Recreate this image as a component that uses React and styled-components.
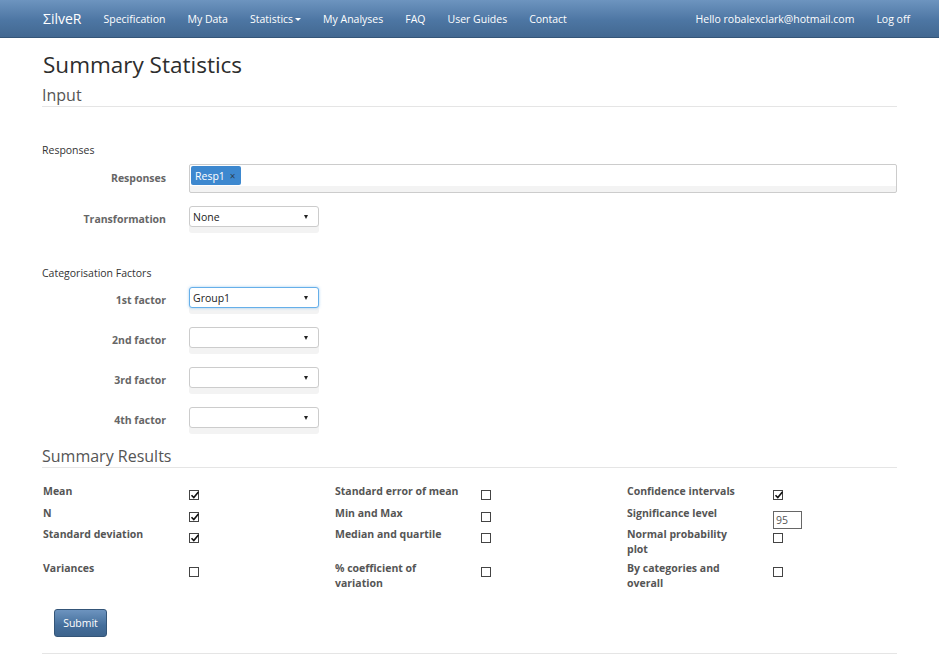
import React from "react";
import styled, { createGlobalStyle } from "styled-components";

const Global = createGlobalStyle`
  *, *::before, *::after { box-sizing: border-box; }
  html, body { margin: 0; padding: 0; background: #fff; }
  body {
    font-family: "Open Sans", "Liberation Sans", sans-serif;
    font-size: 10.5px;
    color: #333;
  }
`;

const Navbar = styled.nav`
  height: 38px;
  display: flex;
  align-items: center;
  justify-content: space-between;
  padding: 0 18px 0 32px;
  background: linear-gradient(#6d94bf, #4d76a3 55%, #426891);
  border-bottom: 1px solid #345578;
`;

const NavGroup = styled.div`
  display: flex;
  align-items: center;
`;

const NavLink = styled.a`
  padding: 0 11px;
  color: #fff;
  font-size: ${(p) => (p.$brand ? "14px" : "10.5px")};
  text-decoration: none;
  white-space: nowrap;
  display: flex;
  align-items: center;
`;

const Caret = styled.span`
  display: inline-block;
  margin-left: 2px;
  margin-top: 1px;
  border-top: 3px solid #fff;
  border-left: 3px solid transparent;
  border-right: 3px solid transparent;
`;

const Container = styled.main`
  padding: 0 42px;
`;

const Title = styled.h1`
  margin: 14px 0 0;
  font-size: 22.5px;
  font-weight: 400;
  line-height: 26px;
  color: #2d2d2d;
  padding-left: 1px;
`;

const Legend = styled.h2`
  margin: ${(p) => p.$top};
  font-size: 16px;
  font-weight: 400;
  line-height: 20px;
  color: #555;
  padding-bottom: 1px;
  border-bottom: 1px solid #e5e5e5;
`;

const GroupLabel = styled.div`
  margin-top: ${(p) => p.$top};
  line-height: 16px;
  color: #333;
`;

const FormRow = styled.div`
  display: flex;
  align-items: flex-start;
  margin-top: ${(p) => p.$top};
`;

const FieldLabel = styled.label`
  width: 147px;
  padding-right: 23px;
  padding-top: ${(p) => p.$pad || "5px"};
  text-align: right;
  font-weight: 700;
  color: #666;
  line-height: 16px;
  flex-shrink: 0;
`;

const TagBox = styled.div`
  flex: 1;
  height: 29px;
  border: 1px solid #ccc;
  border-radius: 2px;
  background: linear-gradient(#fff 0, #fff 21px, #f3f3f3 21px);
  padding: 1px;
`;

const Tag = styled.span`
  display: inline-flex;
  align-items: center;
  gap: 5px;
  height: 19px;
  padding: 0 5px 0 4px;
  background: #3d88cf;
  border-radius: 2px;
  color: #fff;
  b {
    font-weight: 400;
    color: #2c3e50;
    font-size: 10px;
  }
`;

const Select = styled.div`
  width: 130px;
  height: 21px;
  border: 1px solid ${(p) => (p.$focus ? "#66afe9" : "#ccc")};
  border-radius: 3px;
  background: #fff;
  display: flex;
  align-items: center;
  padding: 0 0 0 3px;
  color: #222;
  box-shadow: ${(p) => (p.$focus ? "0 0 3px rgba(102,175,233,0.6)," : "")} 0 6px 0 #f3f3f3;
  &::after {
    content: "";
    margin-right: 10px;
    border-top: 4px solid #222;
    border-left: 2.5px solid transparent;
    border-right: 2.5px solid transparent;
  }
`;

const SelectValue = styled.span`
  flex: 1;
`;

const Results = styled.div`
  display: grid;
  grid-template-columns: repeat(5, 146px) auto;
  grid-template-rows: 22px 21px 34px 30px;
  margin-top: 16px;
`;

const ResultLabel = styled.div`
  font-weight: 700;
  color: #555;
  line-height: 15px;
  white-space: nowrap;
  padding-left: 1px;
`;

const Cell = styled.div`
  padding: 6px 0 0 1px;
`;

const Check = styled.span`
  display: block;
  width: 10px;
  height: 10px;
  border: 1px solid #444;
  background: #fff;
  position: relative;
  svg {
    position: absolute;
    left: 0;
    top: -1px;
  }
`;

const NumInput = styled.div`
  width: 29px;
  height: 18px;
  margin-top: -1px;
  border: 1px solid #666;
  padding-left: 2px;
  line-height: 16px;
  color: #555;
`;

const SubmitBtn = styled.button`
  margin: 18px 0 0 12px;
  width: 53px;
  height: 28px;
  border: 1px solid #345578;
  border-radius: 3px;
  background: linear-gradient(#6d94bf, #446e9b 60%, #3e648d);
  color: #fff;
  font-family: inherit;
  font-size: 10.5px;
  padding: 0;
`;

const Footer = styled.hr`
  margin: 16px 0 0;
  border: 0;
  border-top: 1px solid #e5e5e5;
`;

function CheckBox({ checked }) {
  return (
    <Check>
      {checked && (
        <svg width="10" height="10" viewBox="0 0 10 10">
          <path d="M1.5 5.2 L3.8 7.6 L8.4 2" stroke="#111" strokeWidth="1.6" fill="none" />
        </svg>
      )}
    </Check>
  );
}

const results = [
  [
    { label: "Mean", checked: true },
    { label: "Standard error of mean" },
    { label: "Confidence intervals", checked: true },
  ],
  [
    { label: "N", checked: true },
    { label: "Min and Max" },
    { label: "Significance level", input: "95" },
  ],
  [
    { label: "Standard deviation", checked: true },
    { label: "Median and quartile" },
    { label: ["Normal probability", "plot"] },
  ],
  [
    { label: "Variances" },
    { label: ["% coefficient of", "variation"] },
    { label: ["By categories and", "overall"] },
  ],
];

const factors = [
  { label: "1st factor", value: "Group1", focus: true },
  { label: "2nd factor" },
  { label: "3rd factor" },
  { label: "4th factor" },
];

export default function App() {
  return (
    <>
      <Global />
      <Navbar>
        <NavGroup>
          <NavLink $brand>ΣilveR</NavLink>
          <NavLink>Specification</NavLink>
          <NavLink>My Data</NavLink>
          <NavLink>
            Statistics<Caret />
          </NavLink>
          <NavLink>My Analyses</NavLink>
          <NavLink>FAQ</NavLink>
          <NavLink>User Guides</NavLink>
          <NavLink>Contact</NavLink>
        </NavGroup>
        <NavGroup>
          <NavLink>Hello robalexclark@hotmail.com</NavLink>
          <NavLink>Log off</NavLink>
        </NavGroup>
      </Navbar>
      <Container>
        <Title>Summary Statistics</Title>
        <Legend $top="7px 0 0">Input</Legend>

        <GroupLabel $top="35px">Responses</GroupLabel>
        <FormRow $top="6px">
          <FieldLabel $pad="6px">Responses</FieldLabel>
          <TagBox>
            <Tag>
              Resp1 <b>×</b>
            </Tag>
          </TagBox>
        </FormRow>
        <FormRow $top="13px">
          <FieldLabel>Transformation</FieldLabel>
          <Select>
            <SelectValue>None</SelectValue>
          </Select>
        </FormRow>

        <GroupLabel $top="38px">Categorisation Factors</GroupLabel>
        {factors.map((f, i) => (
          <FormRow key={f.label} $top={i === 0 ? "6px" : "19px"}>
            <FieldLabel>{f.label}</FieldLabel>
            <Select $focus={f.focus}>
              <SelectValue>{f.value || ""}</SelectValue>
            </Select>
          </FormRow>
        ))}

        <Legend $top="18px 0 0">Summary Results</Legend>
        <Results>
          {results.map((row) =>
            row.map((c, j) => (
              <React.Fragment key={`${String(c.label)}-${j}`}>
                <ResultLabel>
                  {Array.isArray(c.label) ? (
                    <>
                      {c.label[0]}
                      <br />
                      {c.label[1]}
                    </>
                  ) : (
                    c.label
                  )}
                </ResultLabel>
                <Cell>{c.input ? <NumInput>{c.input}</NumInput> : <CheckBox checked={c.checked} />}</Cell>
              </React.Fragment>
            ))
          )}
        </Results>
        <SubmitBtn>Submit</SubmitBtn>
        <Footer />
      </Container>
    </>
  );
}
